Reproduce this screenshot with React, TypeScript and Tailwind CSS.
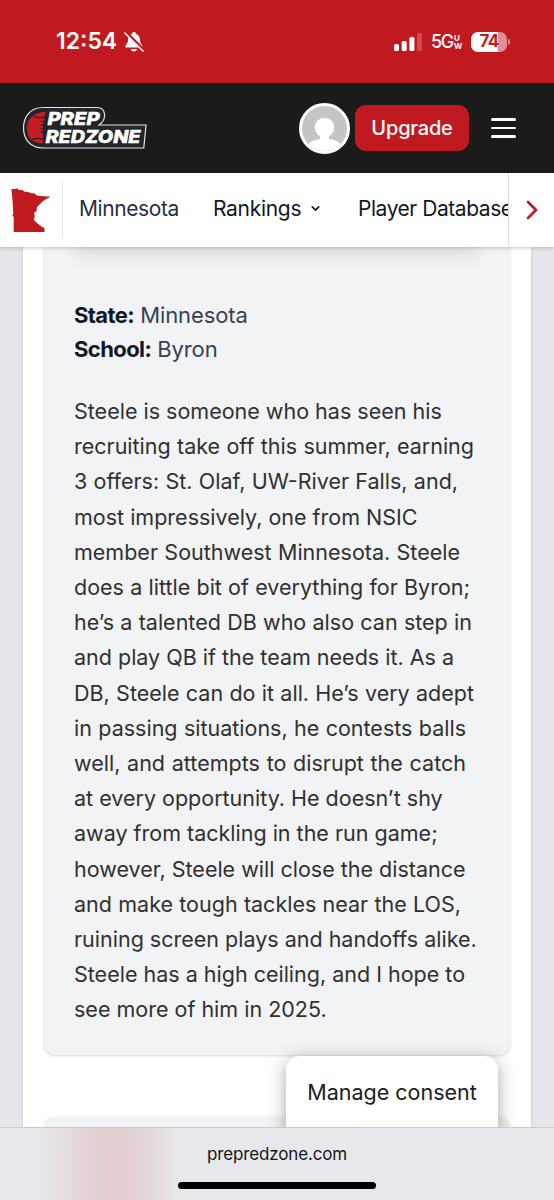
import { ChevronDown, ChevronRight } from 'lucide-react';

const bio = [
  { text: 'Steele is someone who has seen his', width: 366 },
  { text: 'recruiting take off this summer, earning', width: 400 },
  { text: '3 offers: St. Olaf, UW-River Falls, and,', width: 384 },
  { text: 'most impressively, one from NSIC', width: 342 },
  { text: 'member Southwest Minnesota. Steele', width: 386 },
  { text: 'does a little bit of everything for Byron;', width: 396 },
  { text: 'he’s a talented DB who also can step in', width: 398 },
  { text: 'and play QB if the team needs it. As a', width: 380 },
  { text: 'DB, Steele can do it all. He’s very adept', width: 400 },
  { text: 'in passing situations, he contests balls', width: 392 },
  { text: 'well, and attempts to disrupt the catch', width: 392 },
  { text: 'at every opportunity. He doesn’t shy', width: 368 },
  { text: 'away from tackling in the run game;', width: 361 },
  { text: 'however, Steele will close the distance', width: 391 },
  { text: 'and make tough tackles near the LOS,', width: 387 },
  { text: 'ruining screen plays and handoffs alike.', width: 401 },
  { text: 'Steele has a high ceiling, and I hope to', width: 391 },
  { text: 'see more of him in 2025.', width: 252 },
];

function StatusBar() {
  return (
    <div className="flex h-[83px] shrink-0 items-center bg-[#c01a20] pl-[56px] pr-[44px] text-white">
      <span className="w-[63px] text-[23px] font-semibold leading-none">12:54</span>
      <svg className="ml-[5px] h-5 w-5" viewBox="0 0 20 20" fill="none">
        <path d="M10 0c1.3 0 2 .8 2.1 1.9 2.5.8 3.7 2.8 3.8 5.4.1 3 .8 4.3 2.4 6.1.8 1 .3 2.1-.9 2.1H2.6c-1.2 0-1.7-1.1-.9-2.1C3.3 11.6 4 10.3 4.1 7.3 4.2 4.7 5.4 2.7 7.9 1.9 8 .8 8.7 0 10 0Z" fill="white" />
        <path d="M7 17h6c-.3 1.7-1.5 2.5-3 2.500S7.300 18.700 7 17Z" fill="white" />
        <path d="M1.500 0 20 18.500" stroke="#c01a20" strokeWidth="3.400" />
        <path d="M.8 1 19 19" stroke="white" strokeWidth="1.500" strokeLinecap="round" />
      </svg>
      <svg className="ml-auto h-[18px] w-7" viewBox="0 0 28 18" fill="white">
        <rect x="0" y="11" width="5" height="7" rx="1.500" />
        <rect x="7.700" y="8" width="5" height="10" rx="1.500" />
        <rect x="15.400" y="4" width="5" height="14" rx="1.500" />
        <rect x="23" y="0" width="5" height="18" rx="1.500" opacity=".22" />
      </svg>
      <span className="ml-[9px] w-[22px] text-[18px] font-medium leading-none tracking-[-1.3px]">5G</span>
      <span className="ml-px mr-[9px] flex w-[8px] flex-col text-[8px] font-bold leading-[8px]">
        <span>U</span>
        <span>W</span>
      </span>
      <div className="flex h-5 w-9 items-center justify-center rounded-[7px] bg-[linear-gradient(to_right,white_74%,#e28f93_74%)] text-[17px] font-bold leading-none tracking-[-0.6px] text-[#c01a20]">
        74
      </div>
      <div className="ml-[1px] h-[6px] w-[2px] rounded-r-full bg-[#e08085]" />
    </div>
  );
}

function Logo() {
  return (
    <svg className="h-11 w-[126px] shrink-0" viewBox="0 0 126 44">
      <path
        d="M21 1.500H75c9 0 10.500 12 2 17.500H124L121.800 42H21C8 42 1.500 33 1.500 22S8 1.500 21 1.500Z"
        fill="#242528"
        stroke="#e4e4e4"
        strokeWidth="1.200"
      />
      <path d="M23.500 6C11 6 5 13 5 22s4 15 15.500 15.500l.8-8.500-1-2 1-10Z" fill="#c61c23" />
      <path d="M11 10c4 2 8 2 12 1M10 33.500c4-1.500 7-1.500 10.500 0" stroke="#242528" strokeWidth="1.300" fill="none" />
      <path d="M18.500 15.500h4M18.500 19h4M18.500 22.500h4M18.500 26h4" stroke="#242528" strokeWidth="1.200" />
      <g fill="white" stroke="white" strokeWidth=".5" fontFamily="Inter, sans-serif" fontWeight="800" fontStyle="italic" fontSize="17.500">
        <text x="25.500" y="18.500" textLength="52" lengthAdjust="spacingAndGlyphs">PREP</text>
        <text x="23.500" y="36.500" textLength="95" lengthAdjust="spacingAndGlyphs">REDZONE</text>
      </g>
    </svg>
  );
}

function Header() {
  return (
    <header className="flex h-[90px] shrink-0 items-center bg-[#1b1b1b] pl-[22px]">
      <Logo />
      <div className="ml-[151px] size-[51px] shrink-0 overflow-hidden rounded-full border-[3px] border-white bg-[#c5c5c5]">
        <svg viewBox="0 0 45 45" fill="white">
          <circle cx="22.500" cy="21.500" r="9.800" />
          <path d="M18 27h9v6c7 1 10 3 13 6v7H5v-7c3-3 6-5 13-6Z" />
        </svg>
      </div>
      <button className="ml-[5px] h-[46px] w-[114px] shrink-0 rounded-[11px] bg-[#c01a20] text-[20px] font-medium tracking-[-0.2px] text-white">
        Upgrade
      </button>
      <div className="ml-[22px] flex w-[25px] flex-col gap-[6px]">
        <span className="h-[2.5px] rounded-full bg-white" />
        <span className="h-[2.5px] rounded-full bg-white" />
        <span className="h-[2.5px] rounded-full bg-white" />
      </div>
    </header>
  );
}

function Nav() {
  return (
    <nav className="relative z-10 flex h-[74px] shrink-0 items-center bg-white text-[21px] text-[#111827] shadow-[0_1px_4px_rgba(0,0,0,0.22)]">
      <svg className="ml-[11px] h-[45px] w-[40px] shrink-0" viewBox="0 0 40 45" fill="#c01a20">
        <path d="M.4 1H5L6.500 0 7.500 2h4l1.500 1.500L17 4l4 1.500L23 5l3 2.500L30 8l9.800.8L35 11l-4 3-5 5-.5 4-2.500 2 .8 3-1 4 3.200 3 3 2.500 4.500 2.700V44H2.700V29L1.300 27.500l1-2L1.500 12Z" />
      </svg>
      <div className="ml-[11px] h-14 w-px shrink-0 bg-[#e2e4e8]" />
      <div className="flex h-full min-w-0 flex-1 items-center overflow-hidden whitespace-nowrap pb-[3px] pl-[16px]">
        <span className="w-[134px] shrink-0 tracking-[-0.4px] text-[#273141]">Minnesota</span>
        <span className="flex w-[145px] shrink-0 items-center">
          <span className="w-[96px] tracking-[-0.3px]">Rankings</span>
          <ChevronDown size={13} strokeWidth={3} />
        </span>
        <span className="shrink-0 tracking-[-0.45px]">Player Database</span>
      </div>
      <div className="flex h-full w-[46px] shrink-0 items-center justify-center border-l border-[#dedfe2]">
        <ChevronRight size={32} strokeWidth={2} className="text-[#b91c2c]" />
      </div>
    </nav>
  );
}

function PlayerCard() {
  return (
    <div className="h-[808px] shrink-0 rounded-b-[11px] bg-[#f2f3f5] px-[30px] shadow-[0_1px_3px_rgba(0,0,0,0.16)]">
      <div className="mx-[6px] h-0 shadow-[0_2px_16px_5px_rgba(0,0,0,0.13)]" />
      <div className="pt-[51px] text-[22px] leading-[34px] text-[#374151]">
        <p className="tracking-[-0.1px]">
          <strong className="font-bold tracking-[-0.6px] text-[#111827]">State:</strong> Minnesota
        </p>
        <p className="tracking-[-0.1px]">
          <strong className="font-bold tracking-[-0.6px] text-[#111827]">School:</strong> Byron
        </p>
      </div>
      <div className="mt-[28px] text-[21.5px] leading-[35.2px] text-[#303030]">
        {bio.map((line) => (
          <p
            key={line.text}
            className="whitespace-nowrap [text-align-last:justify]"
            style={{ width: line.width }}
          >
            {line.text}
          </p>
        ))}
      </div>
    </div>
  );
}

export default function App() {
  return (
    <div className="flex h-[1200px] w-[554px] flex-col overflow-hidden bg-[#e5e7eb] font-[Inter,sans-serif]">
      <StatusBar />
      <Header />
      <Nav />
      <main className="relative flex h-[880px] shrink-0 justify-center overflow-hidden">
        <div className="flex w-[508px] flex-col bg-white px-[21px] shadow-[0_0_3px_rgba(0,0,0,0.16)]">
          <PlayerCard />
          <div className="mt-[62px] h-10 shrink-0 rounded-t-[11px] bg-[#f2f3f5] shadow-[0_0_3px_rgba(0,0,0,0.10)]" />
        </div>
        <button className="absolute left-[286px] top-[809px] h-[90px] w-[212px] rounded-[14px] bg-white pb-[18px] text-[21.5px] text-[#202020] shadow-[0_4px_18px_rgba(0,0,0,0.34)]">
          Manage consent
        </button>
      </main>
      <footer className="flex h-[73px] shrink-0 flex-col items-center border-t border-[#c9cace] bg-[#e7e8ec] bg-[linear-gradient(to_right,#e7e8ec_40px,#e4d4d8_85px,#e3cdd0_112px,#e3d5d9_140px,#e7e8ec_180px)] pt-[15px]">
        <span className="text-[17px] leading-[22px] tracking-[-0.15px] text-[#161616]">prepredzone.com</span>
        <div className="mt-[17px] h-[7px] w-[198px] rounded-full bg-black" />
      </footer>
    </div>
  );
}
